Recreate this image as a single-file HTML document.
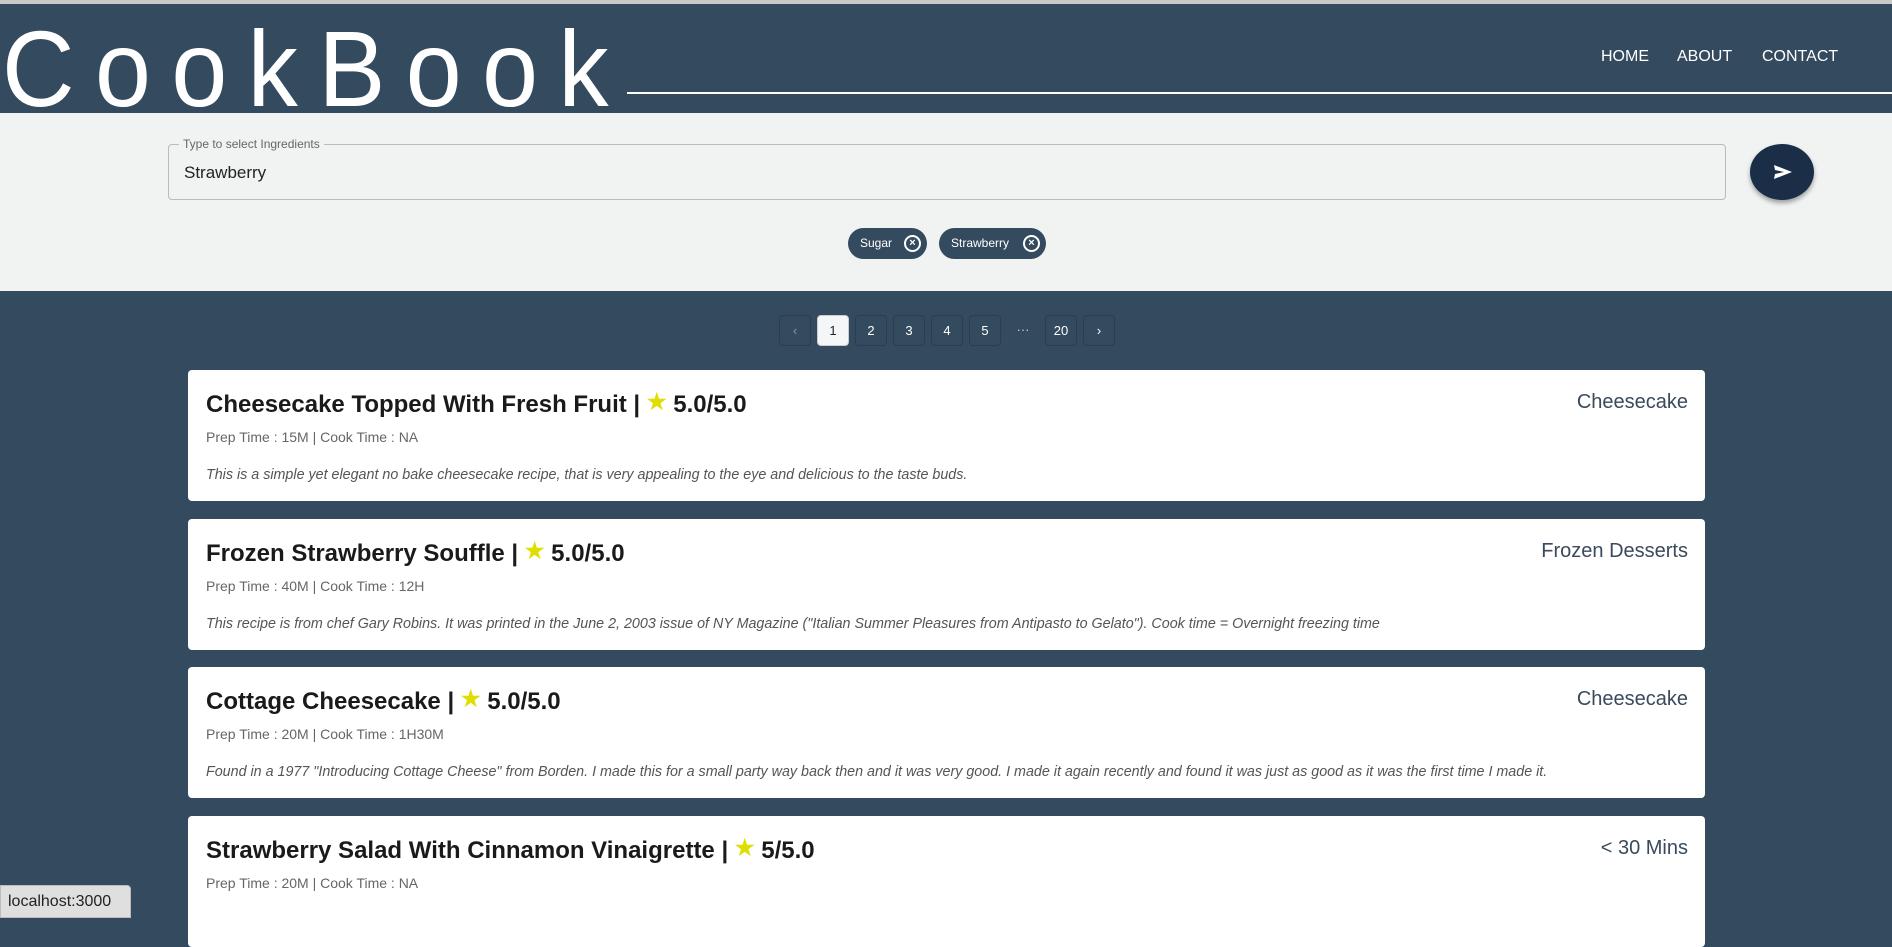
<!DOCTYPE html>
<html><head><meta charset="utf-8"><style>
*{box-sizing:border-box;margin:0;padding:0}
body{width:1892px;height:921px;overflow:hidden;background:#344a5f;font-family:"Liberation Sans",sans-serif;position:relative}
.topb{position:absolute;left:0;top:0;width:1892px;height:4px;background:#c9c9c9}
.logo{position:absolute;left:2px;top:14px;font-size:108px;font-weight:300;color:#fff;letter-spacing:22px;line-height:110px;transform:scaleX(0.93);transform-origin:left}
.hline{position:absolute;left:627px;top:92px;width:1265px;height:2px;background:#fff}
.nav{position:absolute;top:48px;color:#fff;font-size:16px}
.search{position:absolute;left:0;top:113px;width:1892px;height:178px;background:#f1f2f2}
.inp{position:absolute;left:168px;top:31px;width:1558px;height:56px;border:1px solid #bbb;border-radius:4px}
.lbl{position:absolute;left:10px;top:-8px;background:#f1f2f2;padding:0 4px;font-size:12px;color:#666}
.val{position:absolute;left:15px;top:18px;font-size:17px;color:#222}
.btn{position:absolute;left:1750px;top:31px;width:64px;height:56px;border-radius:50%;background:#1a2e48;box-shadow:0 3px 5px rgba(0,0,0,.35)}
.chip{position:absolute;top:115px;height:31px;border-radius:16px;background:#344a5f;color:#fff;font-size:12px;line-height:31px;padding-left:12px}
.chip span{position:absolute;right:6px;top:7px;width:17px;height:17px;border:2px solid #fff;border-radius:50%;font-size:11px;line-height:13px;text-align:center;font-weight:bold}
.pg{position:absolute;top:315px;width:32px;height:31px;border:1px solid #2b3d50;border-radius:4px;color:#fff;font-size:13px;line-height:29px;text-align:center;background:#344a5f}
.card{position:absolute;left:188px;width:1517px;height:131px;background:#fff;border-radius:4px}
.t{position:absolute;left:18px;top:19px;font-size:24px;font-weight:bold;color:#1a1a1a}
.t b{color:#dede00;font-size:22px;vertical-align:3px}
.c{position:absolute;right:17px;top:21px;font-size:20px;color:#3a4a5c}
.p{position:absolute;left:18px;top:59px;font-size:14px;color:#666}
.d{position:absolute;left:18px;top:97px;font-size:14.3px;color:#555;font-style:italic}
.tip{position:absolute;left:0;top:885px;width:131px;height:33px;background:#dfdfdf;border:1px solid #bbb;border-radius:0 4px 0 0;font-size:16px;line-height:31px;padding-left:7px;color:#222}
</style></head><body>
<div class="topb"></div>
<div class="logo">CookBook</div>
<div class="hline"></div>
<div class="nav" style="left:1601px">HOME</div>
<div class="nav" style="left:1677px">ABOUT</div>
<div class="nav" style="left:1762px">CONTACT</div>
<div class="search">
<div class="inp"><div class="lbl">Type to select Ingredients</div><div class="val">Strawberry</div></div>
<div class="btn"><svg width="64" height="56" viewBox="0 0 64 56"><path d="M24 21 L42 28 L24 35 L25 30 L34 28 L25 26 Z" fill="#fff"/></svg></div>
<div class="chip" style="left:848px;width:79px">Sugar<span>×</span></div>
<div class="chip" style="left:939px;width:107px">Strawberry<span>×</span></div>
</div>
<div class="pg" style="left:779px;color:#8a9aaa">‹</div>
<div class="pg" style="left:817px;background:#f5f6f8;color:#222;border-color:#ccc">1</div>
<div class="pg" style="left:855px">2</div>
<div class="pg" style="left:893px">3</div>
<div class="pg" style="left:931px">4</div>
<div class="pg" style="left:969px">5</div>
<div class="pg" style="left:1007px;border:none;color:#ccc">···</div>
<div class="pg" style="left:1045px">20</div>
<div class="pg" style="left:1083px">›</div>
<div class="card" style="top:370px"><div class="t">Cheesecake Topped With Fresh Fruit | <b>★</b> 5.0/5.0</div><div class="c">Cheesecake</div><div class="p">Prep Time : 15M | Cook Time : NA</div><div class="d">This is a simple yet elegant no bake cheesecake recipe, that is very appealing to the eye and delicious to the taste buds.</div></div>
<div class="card" style="top:519px"><div class="t">Frozen Strawberry Souffle | <b>★</b> 5.0/5.0</div><div class="c">Frozen Desserts</div><div class="p">Prep Time : 40M | Cook Time : 12H</div><div class="d">This recipe is from chef Gary Robins. It was printed in the June 2, 2003 issue of NY Magazine ("Italian Summer Pleasures from Antipasto to Gelato"). Cook time = Overnight freezing time</div></div>
<div class="card" style="top:667px"><div class="t">Cottage Cheesecake | <b>★</b> 5.0/5.0</div><div class="c">Cheesecake</div><div class="p">Prep Time : 20M | Cook Time : 1H30M</div><div class="d">Found in a 1977 "Introducing Cottage Cheese" from Borden. I made this for a small party way back then and it was very good. I made it again recently and found it was just as good as it was the first time I made it.</div></div>
<div class="card" style="top:816px"><div class="t">Strawberry Salad With Cinnamon Vinaigrette | <b>★</b> 5/5.0</div><div class="c">&lt; 30 Mins</div><div class="p">Prep Time : 20M | Cook Time : NA</div></div>
<div class="tip">localhost:3000</div>
</body></html>
